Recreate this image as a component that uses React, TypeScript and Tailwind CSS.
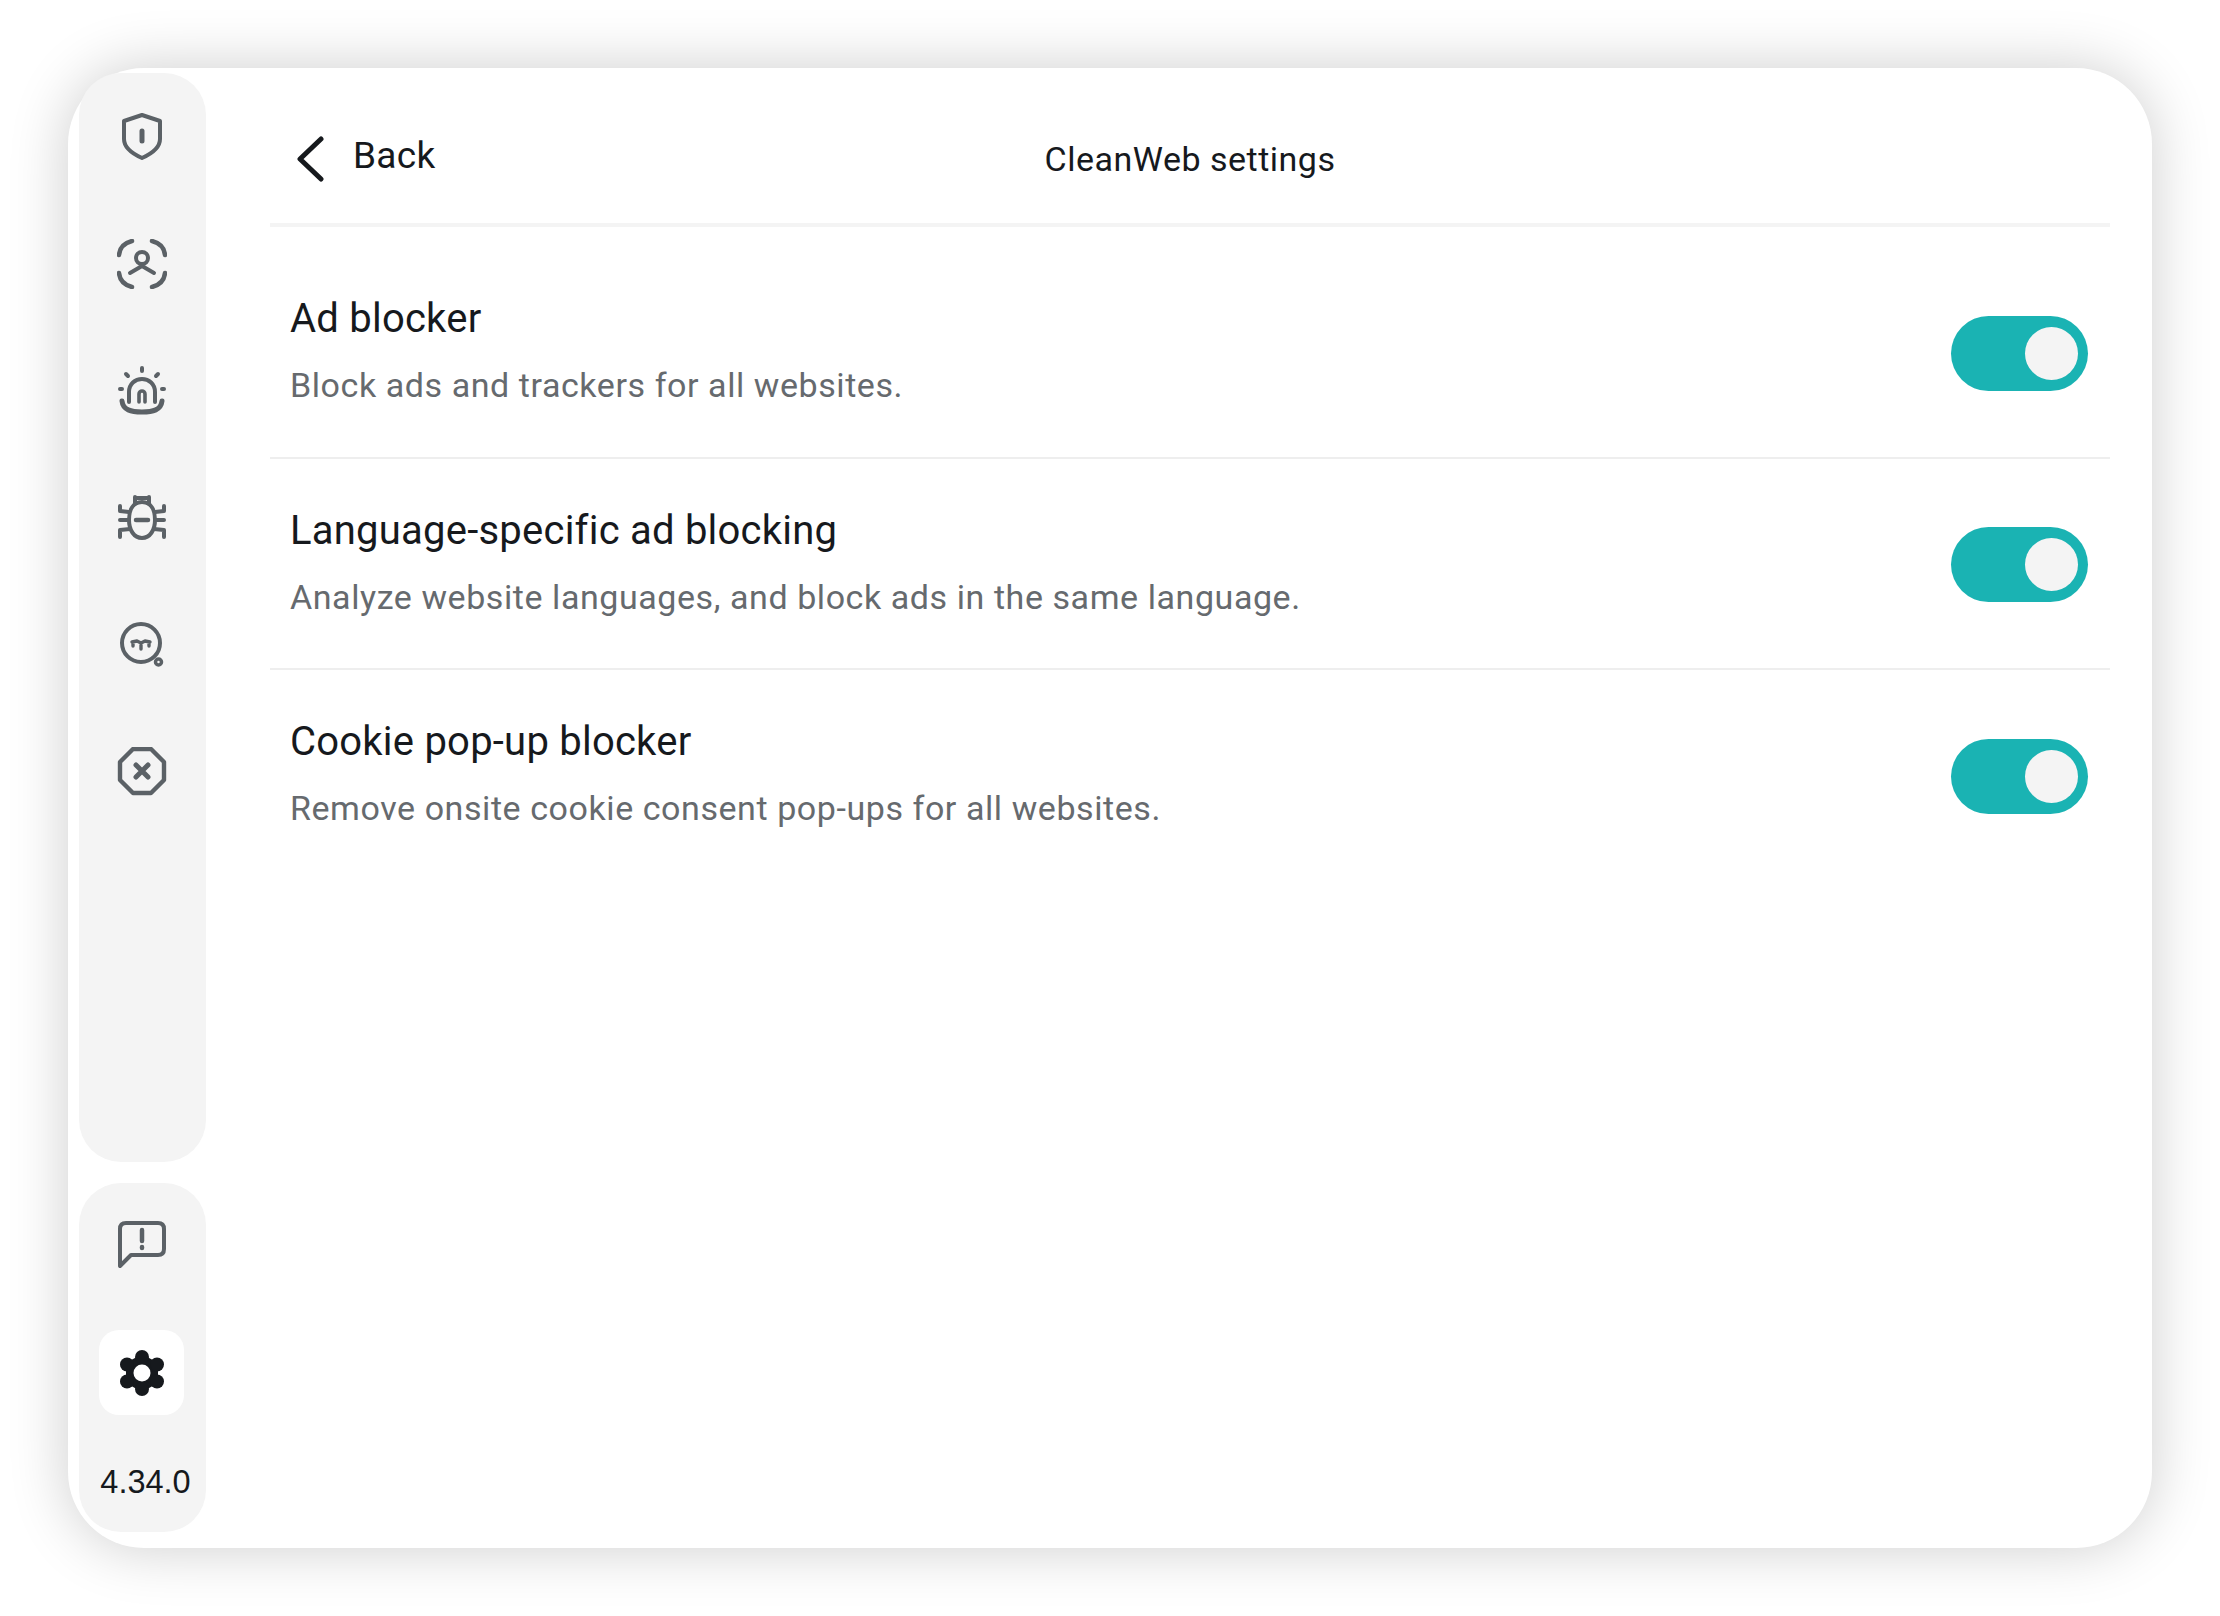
import React from "react";

const Ico = ({ children, fill = "none" }: { children: React.ReactNode; fill?: string }) => (
  <svg width="50" height="50" viewBox="0 0 50 50" fill={fill} stroke="#5b6166" strokeWidth="4" strokeLinecap="round" strokeLinejoin="round">
    {children}
  </svg>
);

const Toggle = () => (
  <div className="mt-[3px] flex h-[75px] w-[137px] shrink-0 items-center justify-end rounded-full bg-[#1ab3b3] pr-[10px]">
    <div className="h-[53px] w-[53px] rounded-full bg-[#f4f4f4]" />
  </div>
);

const Row = ({ title, desc, last }: { title: string; desc: string; last?: boolean }) => (
  <div className={`flex h-[211.5px] items-center justify-between border-b-2 pl-[20px] pr-[22px] ${last ? "border-transparent" : "border-[#eeeeee]"}`}>
    <div className="mt-[1px] flex flex-col">
      <div className="text-[40px] leading-[48px] tracking-[0.23px] text-[#16191d]">{title}</div>
      <div className="mt-[18px] text-[34px] leading-[48px] tracking-[0.57px] text-[#666a6e]">{desc}</div>
    </div>
    <Toggle />
  </div>
);

export default function App() {
  return (
    <div className="h-[1616px] w-[2220px] bg-white pl-[68px] pt-[68px] font-['Roboto',sans-serif]">
      <div className="flex h-[1480px] w-[2084px] rounded-[76px] bg-white pb-[16px] pl-[11px] pr-[42px] pt-[5px] shadow-[0_0_60px_rgba(0,0,0,0.2)]">
        <div className="flex w-[127px] shrink-0 flex-col gap-[21px]">
          <div className="flex h-[1089px] flex-col items-center gap-[77px] rounded-[42px] bg-[#f4f4f4] pr-[2px] pt-[39px]">
            <Ico>
              <path d="M25 3 L43 9 V27 C43 36 34 42 25 46 C16 42 7 36 7 27 V9 Z" />
              <path d="M25 19 V29" strokeWidth="5" />
            </Ico>
            <Ico>
              <path d="M2 16 Q3 5 15 2 M35 2 Q47 5 48 16 M2 34 Q3 45 15 48 M35 48 Q47 45 48 34" strokeWidth="4.5" />
              <circle cx="25" cy="19" r="6" />
              <path d="M13 34 L25 27 L37 34" />
            </Ico>
            <Ico>
              <path d="M12 36 V26 C12 18 18 13 25 13 C32 13 38 18 38 26 V36" />
              <path d="M5 35 C6 44 14 46 25 46 C36 46 44 44 45 35" strokeWidth="5" />
              <path d="M22 36 V28 C22 24 28 24 28 28 V36" strokeWidth="3.6" />
              <path d="M25 2 V5 M9 8 L11 10 M41 8 L39 10 M3 23 H5 M45 23 H47" />
            </Ico>
            <Ico>
              <path d="M25 9 C34 9 38 17 38 27 C38 37 33 45 25 45 C17 45 12 37 12 27 C12 17 16 9 25 9 Z" />
              <path d="M18 11 V4 M32 11 V4 M19 5 H31 M12 19 L3 18 V13 M38 19 L47 18 V13 M12 27 H3 M38 27 H47 M13 36 L3 37 V44 M37 36 L47 37 V44" />
              <path d="M19 27 H31" strokeWidth="4.5" />
            </Ico>
            <Ico>
              <circle cx="24" cy="23" r="19" />
              <circle cx="41.5" cy="42" r="3" strokeWidth="3.5" />
              <path d="M15 22 L20 21 L24 23 L28 21 L33 22 M16 22 V26 M24 23 V29 M32 22 V26" strokeWidth="3.4" />
            </Ico>
            <Ico>
              <path d="M16 2 H34 L47 15 V33 L34 46 H16 L3 33 V15 Z" strokeWidth="4.4" />
              <path d="M19 18 L31 30 M31 18 L19 30" strokeWidth="5" />
            </Ico>
          </div>
          <div className="flex flex-1 flex-col items-center rounded-[42px] bg-[#f4f4f4] pr-[2px] pt-[36px]">
            <Ico>
              <path d="M3 47 V10 C3 6 5 4 9 4 H41 C45 4 47 6 47 10 V30 C47 34 45 36 41 36 H14 Z" />
              <path d="M25 11 V22 M25 28 V29" strokeWidth="4.5" />
            </Ico>
            <div className="mt-[61px] flex h-[85px] w-[85px] items-center justify-center rounded-[20px] bg-white">
              <svg width="50" height="50" viewBox="0 0 50 50">
                <g fill="#16191d">
                  <path d="M25 6 L41 15 V35 L25 44 L9 35 V15 Z" />
                  <circle cx="25" cy="9" r="7" />
                  <circle cx="25" cy="41" r="7" />
                  <circle cx="10" cy="16.5" r="7" />
                  <circle cx="40" cy="16.5" r="7" />
                  <circle cx="10" cy="33.5" r="7" />
                  <circle cx="40" cy="33.5" r="7" />
                </g>
                <circle cx="25" cy="25" r="8.5" fill="#ffffff" />
              </svg>
            </div>
            <div className="ml-[8px] mt-[49px] text-[32.5px] leading-[36px] text-[#16191d] font-['Liberation_Sans',sans-serif]">4.34.0</div>
          </div>
        </div>
        <div className="ml-[64px] flex flex-1 flex-col">
          <div className="relative flex h-[154px] items-center border-b-[4px] border-[#f4f4f4] pb-[8px] pl-[24px] pt-[24px]">
            <svg width="32" height="46" viewBox="0 0 32 46" fill="none" stroke="#16191d" strokeWidth="5" strokeLinecap="round" strokeLinejoin="round" className="mt-[6px]">
              <path d="M27 3 L6 23 L27 43" />
            </svg>
            <span className="ml-[27px] text-[37px] leading-[46px] tracking-[0.3px] text-[#16191d]">Back</span>
            <span className="absolute left-0 right-0 top-[65px] text-center text-[34px] leading-[42px] tracking-[0.5px] text-[#16191d]">CleanWeb settings</span>
          </div>
          <div className="flex flex-col pt-[20px]">
            <Row title="Ad blocker" desc="Block ads and trackers for all websites." />
            <Row title="Language-specific ad blocking" desc="Analyze website languages, and block ads in the same language." />
            <Row title="Cookie pop-up blocker" desc="Remove onsite cookie consent pop-ups for all websites." last />
          </div>
        </div>
      </div>
    </div>
  );
}
